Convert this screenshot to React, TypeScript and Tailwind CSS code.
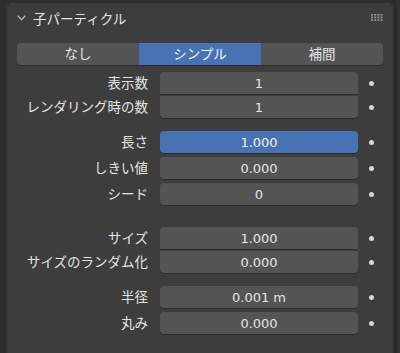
import React from "react";

type Pos = "single" | "top" | "bottom";

const jp = { fontFamily: '"Noto Sans CJK JP", "Noto Sans", sans-serif' };
const num = { fontFamily: '"DejaVu Sans", "Noto Sans CJK JP", sans-serif' };

function Row({ label, value, pos = "single", active = false }: { label: string; value: string; pos?: Pos; active?: boolean }) {
  const round =
    pos === "single" ? "rounded-[4px]" : pos === "top" ? "rounded-t-[4px]" : "rounded-b-[4px]";
  return (
    <div className="flex items-center h-[22px]">
      <div className="w-[131px] text-right text-[13.5px] text-[#e4e4e4] leading-none whitespace-nowrap" style={jp}>
        {label}
      </div>
      <div
        className={`ml-[12px] w-[198px] h-[22px] flex items-center justify-center text-[13px] leading-none shadow-[0_1px_0_#2c2c2c] ${round} ${
          active ? "bg-[#4772b3] text-[#f2f2f2]" : "bg-[#545454] text-[#e4e4e4]"
        }`}
        style={num}
      >
        {value}
      </div>
      <div className="ml-[11px] w-[5px] h-[5px] rounded-full bg-[#d6d6d6]" />
    </div>
  );
}

export default function App() {
  return (
    <div className="w-[400px] h-[353px] bg-[#2e2e2e] flex overflow-hidden">
      <div className="w-[7px] shrink-0" />
      <div className="w-[386px] shrink-0 mt-[3px] bg-[#3d3d3d] rounded-t-[5px] flex flex-col">
        {/* header */}
        <div className="h-[32px] flex items-center pl-[10px] pr-[8px]">
          <svg width="9" height="6" viewBox="0 0 9 6" className="mr-[7px] mt-[-2px]">
            <path d="M0.7 0.7 L4.5 4.6 L8.3 0.7" fill="none" stroke="#bdbdbd" strokeWidth="1.3" />
          </svg>
          <div className="text-[13.5px] text-[#e6e6e6] leading-none" style={jp}>
            子パーティクル
          </div>
          <div className="flex-1" />
          <svg width="12" height="8" viewBox="0 0 12 8" className="mr-[2px] mt-[-2px]">
            {[0, 1, 2].map((r) =>
              [0, 1, 2, 3].map((c) => (
                <rect key={`${r}-${c}`} x={c * 3.2} y={r * 2.6} width="2" height="1.6" fill="#9a9a9a" />
              ))
            )}
          </svg>
        </div>
        {/* body */}
        <div className="px-[10px] pt-[8px] flex flex-col">
          <div className="flex h-[22px] rounded-[4px] overflow-hidden shadow-[0_1px_0_#2c2c2c] text-[13.5px] leading-none" style={jp}>
            <div className="w-[122px] bg-[#545454] text-[#e4e4e4] flex items-center justify-center">なし</div>
            <div className="w-[122px] bg-[#4772b3] text-[#f4f4f4] flex items-center justify-center">シンプル</div>
            <div className="flex-1 bg-[#545454] text-[#e4e4e4] flex items-center justify-center">補間</div>
          </div>

          <div className="mt-[7px] flex flex-col gap-[2px]">
            <Row label="表示数" value="1" pos="top" />
            <Row label="レンダリング時の数" value="1" pos="bottom" />
          </div>

          <div className="mt-[13px] flex flex-col gap-[4px]">
            <Row label="長さ" value="1.000" active />
            <Row label="しきい値" value="0.000" />
            <Row label="シード" value="0" />
          </div>

          <div className="mt-[22px] flex flex-col gap-[2px]">
            <Row label="サイズ" value="1.000" pos="top" />
            <Row label="サイズのランダム化" value="0.000" pos="bottom" />
          </div>

          <div className="mt-[13px] flex flex-col gap-[4px]">
            <Row label="半径" value="0.001 m" />
            <Row label="丸み" value="0.000" />
          </div>
        </div>
      </div>
      <div className="w-[1px] shrink-0" />
      <div className="w-[3px] shrink-0 bg-[#2a2a2a] mt-[8px]" />
      <div className="flex-1 bg-[#333333]" />
    </div>
  );
}
